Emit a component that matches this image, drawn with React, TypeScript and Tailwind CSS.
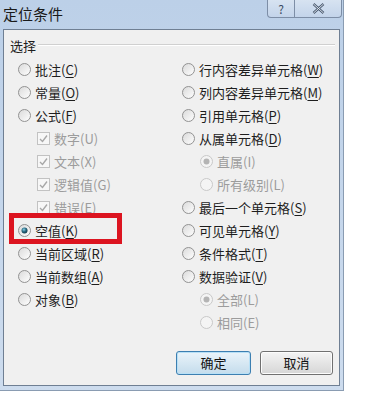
import React from "react"

type Item = {
  label: string
  key: string
  kind?: "radio" | "check"
  checked?: boolean
  disabled?: boolean
  indent?: boolean
}

const left: Item[] = [
  { label: "批注", key: "C" },
  { label: "常量", key: "O" },
  { label: "公式", key: "F" },
  { label: "数字", key: "U", kind: "check", checked: true, disabled: true, indent: true },
  { label: "文本", key: "X", kind: "check", checked: true, disabled: true, indent: true },
  { label: "逻辑值", key: "G", kind: "check", checked: true, disabled: true, indent: true },
  { label: "错误", key: "E", kind: "check", checked: true, disabled: true, indent: true },
  { label: "空值", key: "K", checked: true },
  { label: "当前区域", key: "R" },
  { label: "当前数组", key: "A" },
  { label: "对象", key: "B" },
]

const right: Item[] = [
  { label: "行内容差异单元格", key: "W" },
  { label: "列内容差异单元格", key: "M" },
  { label: "引用单元格", key: "P" },
  { label: "从属单元格", key: "D" },
  { label: "直属", key: "I", checked: true, disabled: true, indent: true },
  { label: "所有级别", key: "L", disabled: true, indent: true },
  { label: "最后一个单元格", key: "S" },
  { label: "可见单元格", key: "Y" },
  { label: "条件格式", key: "T" },
  { label: "数据验证", key: "V" },
  { label: "全部", key: "L", checked: true, disabled: true, indent: true },
  { label: "相同", key: "E", disabled: true, indent: true },
]

function Radio({ checked, disabled }: { checked?: boolean; disabled?: boolean }) {
  return (
    <svg width="13" height="13" viewBox="0 0 13 13" className="shrink-0">
      <defs>
        <linearGradient id="rg" x1="0" y1="0" x2="1" y2="1">
          <stop offset="0" stopColor="#d9d9d9" />
          <stop offset="1" stopColor="#ffffff" />
        </linearGradient>
        <radialGradient id="dot" cx="0.4" cy="0.35" r="0.7">
          <stop offset="0" stopColor="#8ad0e6" />
          <stop offset="0.5" stopColor="#2a6a82" />
          <stop offset="1" stopColor="#0f3546" />
        </radialGradient>
      </defs>
      <circle cx="6.5" cy="6.5" r="6" fill={disabled ? "#f4f4f4" : "url(#rg)"} stroke={disabled ? "#c8c8c8" : "#929292"} strokeWidth="1" />
      {checked && <circle cx="6.5" cy="6.5" r="3" fill={disabled ? "#b4b4b4" : "url(#dot)"} />}
    </svg>
  )
}

function Check({ disabled }: { disabled?: boolean }) {
  return (
    <svg width="13" height="13" viewBox="0 0 13 13" className="shrink-0">
      <rect x="0.5" y="0.5" width="12" height="12" fill="#f7f7f7" stroke={disabled ? "#c2c2c2" : "#8e8f8f"} />
      <path d="M3 7 L5.5 9.5 L10 3.5" fill="none" stroke="#a8a8a8" strokeWidth="1.4" />
    </svg>
  )
}

function Row({ item, indentPx }: { item: Item; indentPx: string }) {
  const kind = item.kind ?? "radio"
  return (
    <div className={`h-[23px] flex items-center ${item.indent ? indentPx : ""}`}>
      {kind === "radio" ? <Radio checked={item.checked} disabled={item.disabled} /> : <Check disabled={item.disabled} />}
      <span className={`ml-[4px] whitespace-nowrap ${item.disabled ? "text-[#9c9c9c]" : "text-[#1e1e1e]"}`}>
        {item.label}(
        {item.disabled ? item.key : <span className="underline underline-offset-2">{item.key}</span>})
      </span>
    </div>
  )
}

export default function App() {
  return (
    <div
      className="w-[368px] h-[400px] bg-white overflow-hidden text-[13px]"
      style={{ fontFamily: '"Noto Sans CJK SC", "Noto Sans", sans-serif' }}
    >
      <div className="relative w-[344px] h-[391px] flex flex-col bg-gradient-to-b from-[#bcd0e8] to-[#cddcee] border-r border-b border-[#8a9cb2]">
        {/* title bar */}
        <div className="h-[29px] flex items-start justify-between">
          <div className="pl-[3px] pt-[4px] text-[15px] text-[#1a1a1a] leading-[20px]">定位条件</div>
          <div className="flex mr-[1px]">
            <div className="w-[28px] h-[18px] border border-t-0 border-[#7d8ea6] rounded-bl-[4px] bg-gradient-to-b from-[#d7e3f1] to-[#c3d4ea] flex items-center justify-center text-[12px] text-[#3a4a60] leading-none">
              ?
            </div>
            <div className="w-[47px] h-[18px] border border-t-0 border-l-0 border-[#7d8ea6] rounded-br-[4px] bg-gradient-to-b from-[#d7e3f1] to-[#c3d4ea] flex items-center justify-center">
              <svg width="13" height="11" viewBox="0 0 13 11">
                <path d="M1.5 1 L11.5 10 M11.5 1 L1.5 10" stroke="#4a5a70" strokeWidth="2.4" fill="none" />
                <path d="M1.5 1 L11.5 10 M11.5 1 L1.5 10" stroke="#e8eef6" strokeWidth="0.9" fill="none" />
              </svg>
            </div>
          </div>
        </div>

        {/* client area */}
        <div className="ml-[3px] mr-[3px] mb-[4px] flex-1 border border-[#6f7f93] bg-[#f0f0f0] flex flex-col">
          <div className="mt-[7px] h-[16px] flex items-center pl-[6px]">
            <span className="text-[#1e1e1e] leading-none">选择</span>
            <div className="flex-1 ml-[2px] mr-[4px] h-[2px] border-t border-[#d0d0d0] border-b-white border-b" />
          </div>

          <div className="mt-[5px] pl-[14px] grid grid-cols-[164px_1fr]">
            <div className="flex flex-col">
              {left.map((it, i) => (
                <Row key={i} item={it} indentPx="pl-[19px]" />
              ))}
            </div>
            <div className="flex flex-col">
              {right.map((it, i) => (
                <Row key={i} item={it} indentPx="pl-[18px]" />
              ))}
            </div>
          </div>

          <div className="mt-[17px] flex justify-end gap-[9px] pr-[6px]">
            <button className="w-[75px] h-[24px] rounded-[3px] border border-[#3c7fb1] bg-gradient-to-b from-[#eaf4fa] to-[#c4dcec] shadow-[inset_0_0_0_1px_#b8e0f6] text-[13px] text-[#111]">
              确定
            </button>
            <button className="w-[73px] h-[24px] rounded-[3px] border border-[#707070] bg-gradient-to-b from-[#f4f4f4] to-[#d6d6d6] shadow-[inset_0_0_0_1px_#fcfcfc] text-[13px] text-[#111]">
              取消
            </button>
          </div>
        </div>

        {/* red annotation box */}
        <div className="absolute left-[9px] top-[213px] w-[113px] h-[31px] border-[5px] border-[#dc1420]" />
      </div>
    </div>
  )
}
